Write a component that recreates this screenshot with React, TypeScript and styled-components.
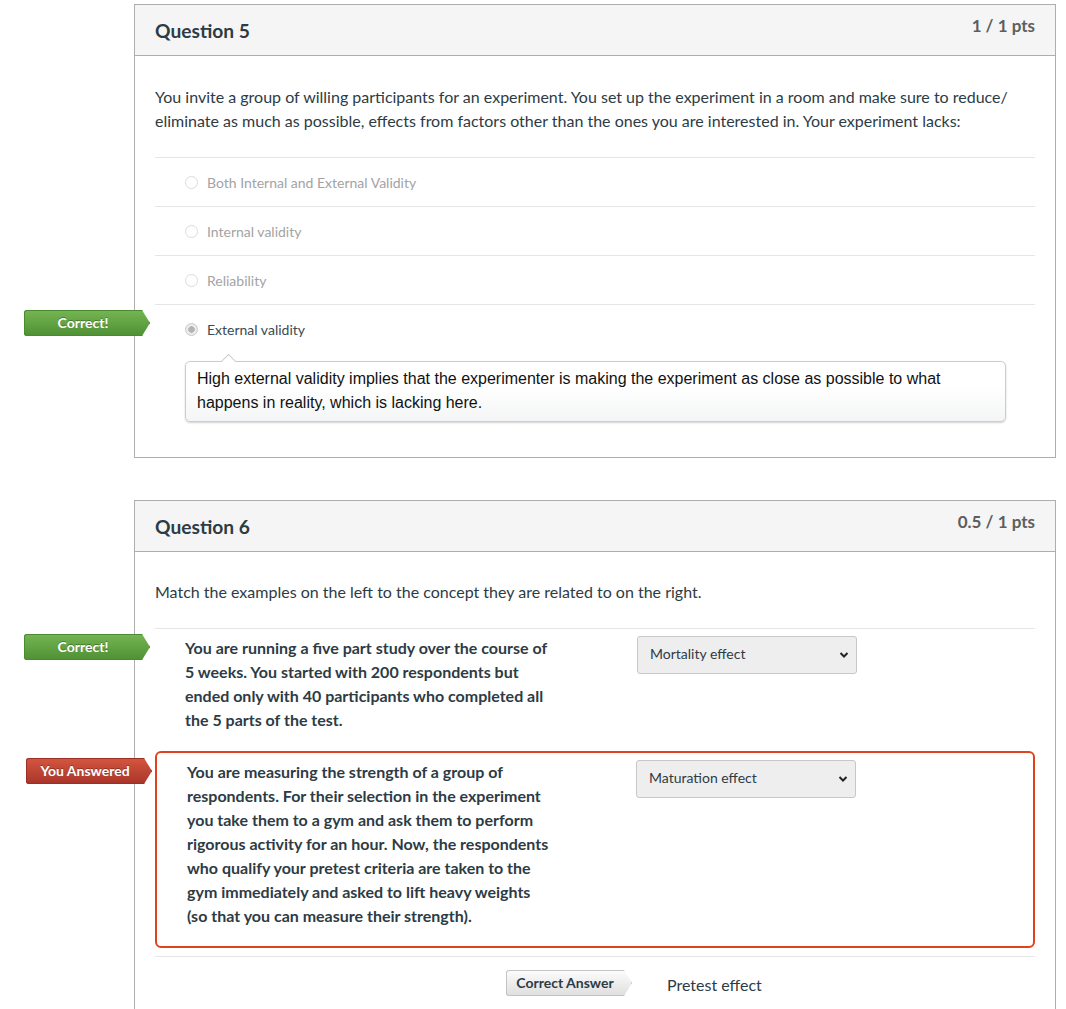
import React, { FC } from 'react'
import styled, { createGlobalStyle } from 'styled-components'

const GlobalStyle = createGlobalStyle`
  body {
    margin: 0;
    background: #fff;
    font-family: Lato, "Open Sans", sans-serif;
    color: #2d3b45;
  }
`

const Page = styled.div`
  padding: 4px 0 0 134px;
`

const Card = styled.section<{ $gap?: number }>`
  width: 922px;
  box-sizing: border-box;
  border: 1px solid #aeaeae;
  margin-top: ${(p) => p.$gap ?? 0}px;
  background: #fff;
`

const Header = styled.header`
  height: 50px;
  display: flex;
  justify-content: space-between;
  align-items: center;
  padding: 0 20px;
  background: #f5f5f5;
  border-bottom: 1px solid #aeaeae;
`

const Title = styled.h2`
  margin: 0;
  font-size: 19.2px;
  font-weight: 700;
  color: #2d3b45;
`

const Points = styled.span`
  align-self: flex-start;
  margin-top: 11px;
  line-height: 20px;
  font-size: 17px;
  font-weight: 700;
  color: #5e5e5e;
`

const Body = styled.div<{ $top: number; $bottom: number }>`
  padding: ${(p) => p.$top}px 20px ${(p) => p.$bottom}px;
`

const Prompt = styled.p`
  margin: 0 0 24px;
  font-size: 16px;
  line-height: 24px;
  color: #2d3b45;
`

const OptionRow = styled.div`
  position: relative;
  display: flex;
  align-items: center;
  gap: 9px;
  min-height: 48px;
  padding-left: 30px;
  border-top: 1px solid #e6e6e6;
`

const Radio = styled.span<{ $checked?: boolean }>`
  width: 11px;
  height: 11px;
  border-radius: 50%;
  border: 1px solid ${(p) => (p.$checked ? '#c8c8c8' : '#dcdcdc')};
  background: ${(p) =>
    p.$checked
      ? 'radial-gradient(circle, #b4b4b4 0 3px, #ececec 3.5px)'
      : '#fff'};
  flex-shrink: 0;
`

const OptionText = styled.span<{ $active?: boolean }>`
  font-size: 14px;
  color: ${(p) => (p.$active ? '#3b4a54' : '#a3a3a3')};
`

const Comment = styled.div`
  position: relative;
  margin: 8px 30px 0 30px;
  width: 821px;
  box-sizing: border-box;
  padding: 5px 11px 6px;
  border: 1px solid #c9cdd1;
  border-radius: 5px;
  background: linear-gradient(#fff 40%, #f4f5f6);
  box-shadow: 0 1px 2px rgba(0, 0, 0, 0.18);
  font-family: "Liberation Sans", Arial, sans-serif;
  font-size: 16px;
  line-height: 24px;
  color: #111;

  &::before {
    content: '';
    position: absolute;
    top: -6px;
    left: 37px;
    width: 10px;
    height: 10px;
    background: #fff;
    border-top: 1px solid #c9cdd1;
    border-left: 1px solid #c9cdd1;
    transform: rotate(45deg);
  }
`

const Flag = styled.span<{ $tone: 'green' | 'red' | 'gray'; $left?: number; $top?: number }>`
  position: ${(p) => (p.$tone === 'gray' ? 'static' : 'absolute')};
  left: ${(p) => p.$left ?? -131}px;
  top: ${(p) => p.$top ?? 5}px;
  display: inline-flex;
  align-items: center;
  justify-content: center;
  width: 126px;
  height: 26px;
  padding: 0 8px 2px 0;
  box-sizing: border-box;
  font-family: Lato, sans-serif;
  font-size: 14px;
  font-weight: 700;
  color: ${(p) => (p.$tone === 'gray' ? '#2d3b45' : '#fff')};
  text-shadow: ${(p) => (p.$tone === 'gray' ? 'none' : '0 -1px 0 rgba(0,0,0,0.3)')};
  border-radius: 3px 0 0 3px;
  clip-path: polygon(0 0, calc(100% - 8px) 0, 100% 50%, calc(100% - 8px) 100%, 0 100%);
  background: ${(p) =>
    p.$tone === 'green'
      ? 'linear-gradient(#75b552, #4e9034)'
      : p.$tone === 'red'
      ? 'linear-gradient(#d4563f, #a8352a)'
      : 'linear-gradient(#fdfdfd, #dedede)'};
  box-shadow: inset 0 0 0 1px
    ${(p) =>
      p.$tone === 'green' ? '#4a8a30' : p.$tone === 'red' ? '#9b2f25' : '#c3c3c3'};
`

const MatchRow = styled.div<{ $wrong?: boolean }>`
  position: relative;
  display: flex;
  align-items: flex-start;
  ${(p) =>
    p.$wrong
      ? `
    border: 2px solid #e0421d;
    border-radius: 6px;
    padding: 7px 0 18px 30px;
  `
      : `
    border-top: 1px solid #e6e6e6;
    padding: 7px 0 19px 30px;
  `}
`

const MatchText = styled.div`
  width: 452px;
  flex-shrink: 0;

  & > span {
    display: block;
    width: 364px;
    font-size: 16px;
    line-height: 24px;
    font-weight: 700;
    color: #2d3b45;
  }
`

const SelectWrap = styled.div<{ $shift?: number }>`
  position: relative;
  margin-left: ${(p) => p.$shift ?? 0}px;

  svg {
    position: absolute;
    right: 8px;
    top: 15px;
    pointer-events: none;
  }
`

const Select = styled.select`
  appearance: none;
  display: block;
  width: 220px;
  height: 38px;
  padding: 0 28px 3px 12px;
  border: 1px solid #c8c8c8;
  border-radius: 3px;
  background: #eeeeee;
  font-family: Lato, sans-serif;
  font-size: 14px;
  color: #2d3b45;
`

const Divider = styled.hr`
  margin: 8px 0 0;
  border: 0;
  border-top: 1px solid #e6e6e6;
`

const AnswerRow = styled.div`
  display: flex;
  align-items: center;
  gap: 35px;
  padding: 13px 0 0 351px;
`

const AnswerText = styled.span`
  font-size: 16px;
  color: #2d3b45;
  padding-top: 3px;
`

const Chevron: FC = () => (
  <svg width="10" height="8" viewBox="0 0 10 8">
    <path d="M1.5 2 L5 5.5 L8.5 2" fill="none" stroke="#222" strokeWidth="2" />
  </svg>
)

const Dropdown: FC<{ value: string; shift?: number }> = ({ value, shift }) => (
  <SelectWrap $shift={shift}>
    <Select defaultValue={value}>
      <option>[ Select ]</option>
      <option>Mortality effect</option>
      <option>Maturation effect</option>
      <option>Pretest effect</option>
    </Select>
    <Chevron />
  </SelectWrap>
)

const options = [
  'Both Internal and External Validity',
  'Internal validity',
  'Reliability',
]

const App: FC = () => (
  <Page>
    <GlobalStyle />
    <Card>
      <Header>
        <Title>Question 5</Title>
        <Points>1 / 1 pts</Points>
      </Header>
      <Body $top={29} $bottom={35}>
        <Prompt>
          You invite a group of willing participants for an experiment. You set up the
          experiment in a room and make sure to reduce/ eliminate as much as possible,
          effects from factors other than the ones you are interested in. Your experiment
          lacks:
        </Prompt>
        {options.map((o) => (
          <OptionRow key={o}>
            <Radio />
            <OptionText>{o}</OptionText>
          </OptionRow>
        ))}
        <OptionRow>
          <Flag $tone="green">Correct!</Flag>
          <Radio $checked />
          <OptionText $active>External validity</OptionText>
        </OptionRow>
        <Comment>
          High external validity implies that the experimenter is making the experiment as
          close as possible to what happens in reality, which is lacking here.
        </Comment>
      </Body>
    </Card>

    <Card $gap={42}>
      <Header>
        <Title>Question 6</Title>
        <Points>0.5 / 1 pts</Points>
      </Header>
      <Body $top={28} $bottom={40}>
        <Prompt>Match the examples on the left to the concept they are related to on the right.</Prompt>
        <MatchRow>
          <Flag $tone="green">Correct!</Flag>
          <MatchText>
            <span>
              You are running a five part study over the course of 5 weeks. You started with
              200 respondents but ended only with 40 participants who completed all the 5
              parts of the test.
            </span>
          </MatchText>
          <Dropdown value="Mortality effect" />
        </MatchRow>
        <MatchRow $wrong>
          <Flag $tone="red" $top={5}>You Answered</Flag>
          <MatchText>
            <span>
              You are measuring the strength of a group of respondents. For their selection in
              the experiment you take them to a gym and ask them to perform rigorous activity
              for an hour. Now, the respondents who qualify your pretest criteria are taken to
              the gym immediately and asked to lift heavy weights (so that you can measure their
              strength).
            </span>
          </MatchText>
          <Dropdown value="Maturation effect" shift={-3} />
        </MatchRow>
        <Divider />
        <AnswerRow>
          <Flag $tone="gray">Correct Answer</Flag>
          <AnswerText>Pretest effect</AnswerText>
        </AnswerRow>
      </Body>
    </Card>
  </Page>
)

export default App
